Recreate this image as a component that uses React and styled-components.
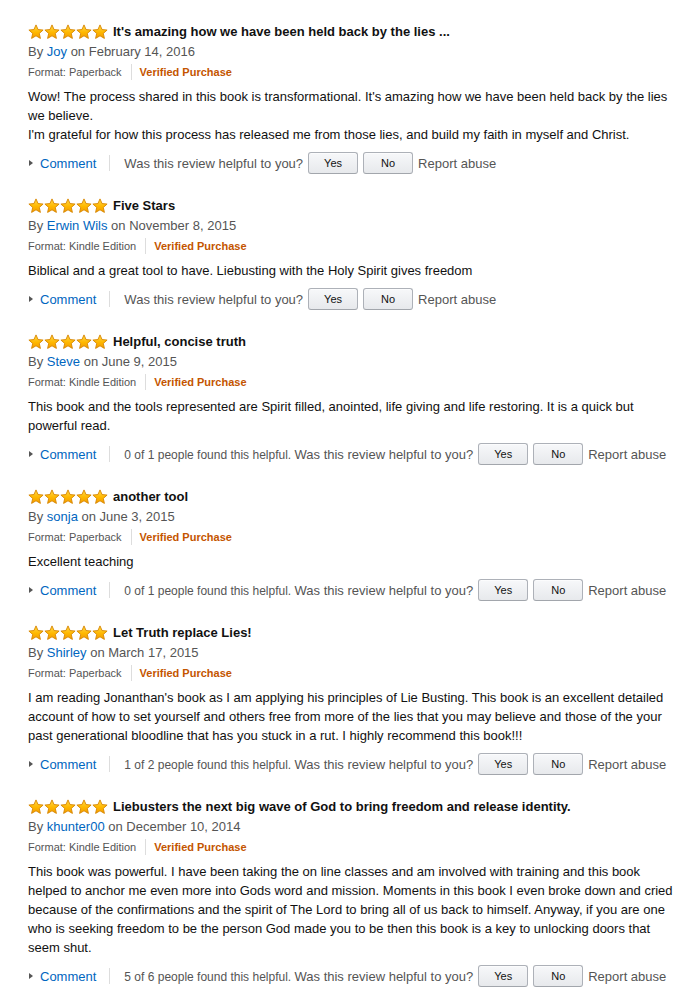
import styled, { createGlobalStyle } from 'styled-components'

const reviews = [
  {
    title: "It's amazing how we have been held back by the lies ...",
    author: 'Joy',
    date: 'February 14, 2016',
    format: 'Paperback',
    body: [
      "Wow! The process shared in this book is transformational. It's amazing how we have been held back by the lies we believe.",
      "I'm grateful for how this process has released me from those lies, and build my faith in myself and Christ.",
    ],
  },
  {
    title: 'Five Stars',
    author: 'Erwin Wils',
    date: 'November 8, 2015',
    format: 'Kindle Edition',
    body: ['Biblical and a great tool to have. Liebusting with the Holy Spirit gives freedom'],
  },
  {
    title: 'Helpful, concise truth',
    author: 'Steve',
    date: 'June 9, 2015',
    format: 'Kindle Edition',
    body: ['This book and the tools represented are Spirit filled, anointed, life giving and life restoring. It is a quick but powerful read.'],
    helpful: '0 of 1 people found this helpful.',
  },
  {
    title: 'another tool',
    author: 'sonja',
    date: 'June 3, 2015',
    format: 'Paperback',
    body: ['Excellent teaching'],
    helpful: '0 of 1 people found this helpful.',
  },
  {
    title: 'Let Truth replace Lies!',
    author: 'Shirley',
    date: 'March 17, 2015',
    format: 'Paperback',
    body: ["I am reading Jonanthan's book as I am applying his principles of Lie Busting. This book is an excellent detailed account of how to set yourself and others free from more of the lies that you may believe and those of the your past generational bloodline that has you stuck in a rut. I highly recommend this book!!!"],
    helpful: '1 of 2 people found this helpful.',
  },
  {
    title: 'Liebusters the next big wave of God to bring freedom and release identity.',
    author: 'khunter00',
    date: 'December 10, 2014',
    format: 'Kindle Edition',
    body: ['This book was powerful. I have been taking the on line classes and am involved with training and this book helped to anchor me even more into Gods word and mission. Moments in this book I even broke down and cried because of the confirmations and the spirit of The Lord to bring all of us back to himself. Anyway, if you are one who is seeking freedom to be the person God made you to be then this book is a key to unlocking doors that seem shut.'],
    helpful: '5 of 6 people found this helpful.',
  },
]

const Star = () => (
  <svg width="16" height="16" viewBox="0 0 16 16">
    <defs>
      <linearGradient id="starFill" x1="0" y1="0" x2="0" y2="1">
        <stop offset="0" stopColor="#ffd84a" />
        <stop offset="0.55" stopColor="#ffb800" />
        <stop offset="1" stopColor="#f29a00" />
      </linearGradient>
    </defs>
    <path
      d="M8 0.9 L10.05 5.55 L15.1 6.05 L11.3 9.4 L12.4 14.4 L8 11.8 L3.6 14.4 L4.7 9.4 L0.9 6.05 L5.95 5.55 Z"
      fill="url(#starFill)"
      stroke="#d68400"
      strokeWidth="0.9"
      strokeLinejoin="round"
    />
  </svg>
)

const Review = ({ review }) => (
  <ReviewBlock>
    <TitleRow>
      <Stars>
        {[0, 1, 2, 3, 4].map((i) => <Star key={i} />)}
      </Stars>
      <Title>{review.title}</Title>
    </TitleRow>
    <Byline>
      By <Link href="#">{review.author}</Link> on {review.date}
    </Byline>
    <Meta>
      <span>Format: {review.format}</span>
      <Divider />
      <Verified>Verified Purchase</Verified>
    </Meta>
    <Body>
      {review.body.map((p, i) => (
        <div key={i}>{p}</div>
      ))}
    </Body>
    <Actions>
      <Caret />
      <Link href="#">Comment</Link>
      <ActionDivider />
      <Muted>
        {review.helpful && <HelpfulCount>{review.helpful} </HelpfulCount>}
        Was this review helpful to you?
      </Muted>
      <Button>Yes</Button>
      <Button>No</Button>
      <Muted>Report abuse</Muted>
    </Actions>
  </ReviewBlock>
)

const App = () => {
  return (
    <>
      <GlobalStyle />
      <Page>
        {reviews.map((r, i) => (
          <Review key={i} review={r} />
        ))}
      </Page>
    </>
  )
}

export default App

const GlobalStyle = createGlobalStyle`
  body {
    margin: 0;
    background: #fff;
    font-family: "Liberation Sans", Arial, sans-serif;
    color: #111;
  }
`
const Page = styled.div`
  padding: 22px 8px 0 28px;
`
const ReviewBlock = styled.div`
  margin-bottom: 21px;
`
const TitleRow = styled.div`
  display: flex;
  align-items: center;
  height: 20px;
`
const Stars = styled.div`
  display: flex;
  margin-right: 5px;
  & svg {
    display: block;
  }
`
const Title = styled.span`
  font-size: 13px;
  font-weight: bold;
  line-height: 20px;
`
const Byline = styled.div`
  font-size: 13px;
  line-height: 20px;
  color: #555;
`
const Link = styled.a`
  color: #0066c0;
  text-decoration: none;
`
const Meta = styled.div`
  display: flex;
  align-items: center;
  font-size: 11px;
  line-height: 20px;
  color: #555;
`
const Divider = styled.span`
  width: 1px;
  height: 16px;
  background: #ddd;
  margin: 0 8px 0 9px;
`
const Verified = styled.span`
  color: #c45500;
  font-weight: bold;
`
const Body = styled.div`
  margin-top: 5px;
  font-size: 13px;
  line-height: 19px;
  color: #111;
`
const Actions = styled.div`
  display: flex;
  align-items: center;
  height: 24px;
  margin-top: 7px;
  font-size: 13px;
  white-space: nowrap;
  & > * {
    flex-shrink: 0;
  }
`
const Caret = styled.span`
  width: 0;
  height: 0;
  border-top: 3px solid transparent;
  border-bottom: 3px solid transparent;
  border-left: 4px solid #555;
  margin: 0 7px 0 1px;
`
const ActionDivider = styled.span`
  width: 1px;
  height: 16px;
  background: #ddd;
  margin: 0 14px 0 13px;
`
const Muted = styled.span`
  color: #555;
`
const HelpfulCount = styled.span`
  font-size: 12px;
`
const Button = styled.button`
  width: 50px;
  height: 22px;
  margin: 0 5px;
  padding: 0;
  font-family: "Liberation Sans", Arial, sans-serif;
  font-size: 11px;
  color: #111;
  border: 1px solid #adb1b8;
  border-bottom-color: #a2a6ac;
  border-radius: 3px;
  background: linear-gradient(to bottom, #f7f8fa, #e7e9ec);
  box-shadow: inset 0 1px 0 rgba(255, 255, 255, 0.6);
  & + & {
    margin-left: 0;
  }
`
